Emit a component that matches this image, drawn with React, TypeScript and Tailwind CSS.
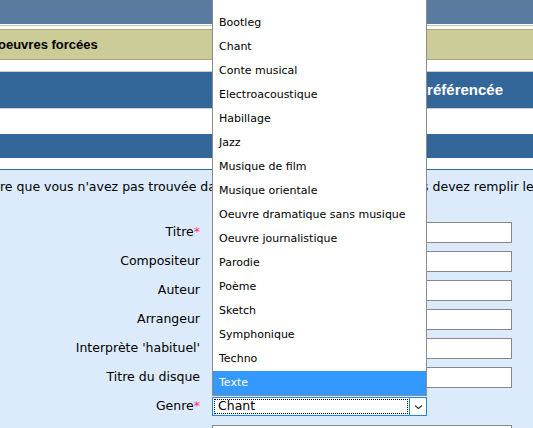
import React from "react";

const genres = [
  "Bootleg",
  "Chant",
  "Conte musical",
  "Electroacoustique",
  "Habillage",
  "Jazz",
  "Musique de film",
  "Musique orientale",
  "Oeuvre dramatique sans musique",
  "Oeuvre journalistique",
  "Parodie",
  "Poème",
  "Sketch",
  "Symphonique",
  "Techno",
  "Texte",
];

const fields = [
  { label: "Titre", required: true },
  { label: "Compositeur", required: false },
  { label: "Auteur", required: false },
  { label: "Arrangeur", required: false },
  { label: "Interprète 'habituel'", required: false },
  { label: "Titre du disque", required: false },
];

export default function App() {
  return (
    <div className="relative w-[533px] h-[428px] overflow-hidden bg-white font-['DejaVu_Sans',sans-serif] text-black">
      <div className="h-[24px] bg-[#5a7aa0]" />
      <div className="h-[1px]" />
      <div className="h-[1px] bg-[#c4c4b4]" />
      <div className="h-[3px]" />
      <div className="h-[31px] bg-[#cccc99] border-y border-[#a8a87c] flex items-center overflow-hidden">
        <span className="-ml-[2px] font-['Liberation_Sans',sans-serif] font-bold text-[13px] whitespace-nowrap">oeuvres forcées</span>
      </div>
      <div className="h-[11px]" />
      <div className="h-[38px] bg-[#336699] border-y border-[#cccccc] flex items-center justify-end pr-[30px] overflow-hidden">
        <span className="font-['Liberation_Sans',sans-serif] font-bold text-[15px] text-white whitespace-nowrap">Oeuvre non référencée</span>
      </div>
      <div className="h-[25px]" />
      <div className="h-[24px] bg-[#336699]" />
      <div className="h-[11px]" />
      <div className="border-t border-[#336699] bg-[#dcebfc] h-[300px]">
        <p className="pt-[9px] h-[52px] text-[12.5px] whitespace-nowrap leading-[16px] overflow-hidden">
          re que vous n'avez pas trouvée dans le répertoire des oeuvres, vous devez remplir le formulaire ci-dessous.
        </p>
        <div className="flex flex-col gap-[8px]">
          {fields.map((f) => (
            <div key={f.label} className="flex items-center h-[21px]">
              <label className="w-[200px] text-right text-[12.5px] whitespace-nowrap">
                {f.label}
                {f.required && <span className="text-[#ff3366]">*</span>}
              </label>
              <input type="text" className="ml-[12px] w-[300px] h-[21px] bg-white border border-[#888888] outline-none" />
            </div>
          ))}
          <div className="flex items-center h-[21px]">
            <label className="w-[200px] text-right text-[12.5px] whitespace-nowrap">
              Genre<span className="text-[#ff3366]">*</span>
            </label>
            <div className="ml-[12px] w-[215px] h-[19px] bg-white border border-[#1e88e5] flex">
              <div className="flex-1 m-[1px] border border-dotted border-black flex items-center pl-[3px] text-[12.5px] leading-none">Chant</div>
              <div className="w-[17px] border-l border-[#1e88e5] flex items-center justify-center">
                <svg width="9" height="6" viewBox="0 0 9 6">
                  <path d="M1 1.5 L4.5 4.5 L8 1.5" fill="none" stroke="#333" strokeWidth="1.2" />
                </svg>
              </div>
            </div>
          </div>
          <div className="flex items-center h-[21px]">
            <div className="w-[200px]" />
            <input type="text" className="ml-[12px] w-[300px] h-[21px] bg-white border border-[#888888] outline-none" />
          </div>
        </div>
      </div>

      <div className="absolute left-[212px] top-0 w-[215px] h-[396px] bg-white border-x border-b border-[#8c8c8c] pt-[11px] text-[11px]">
        {genres.map((g) => (
          <div
            key={g}
            className={`h-[24px] flex items-center pl-[6px] pt-[1px] ${g === "Texte" ? "bg-[#3399ff] text-white" : ""}`}
          >
            {g}
          </div>
        ))}
      </div>
    </div>
  );
}
